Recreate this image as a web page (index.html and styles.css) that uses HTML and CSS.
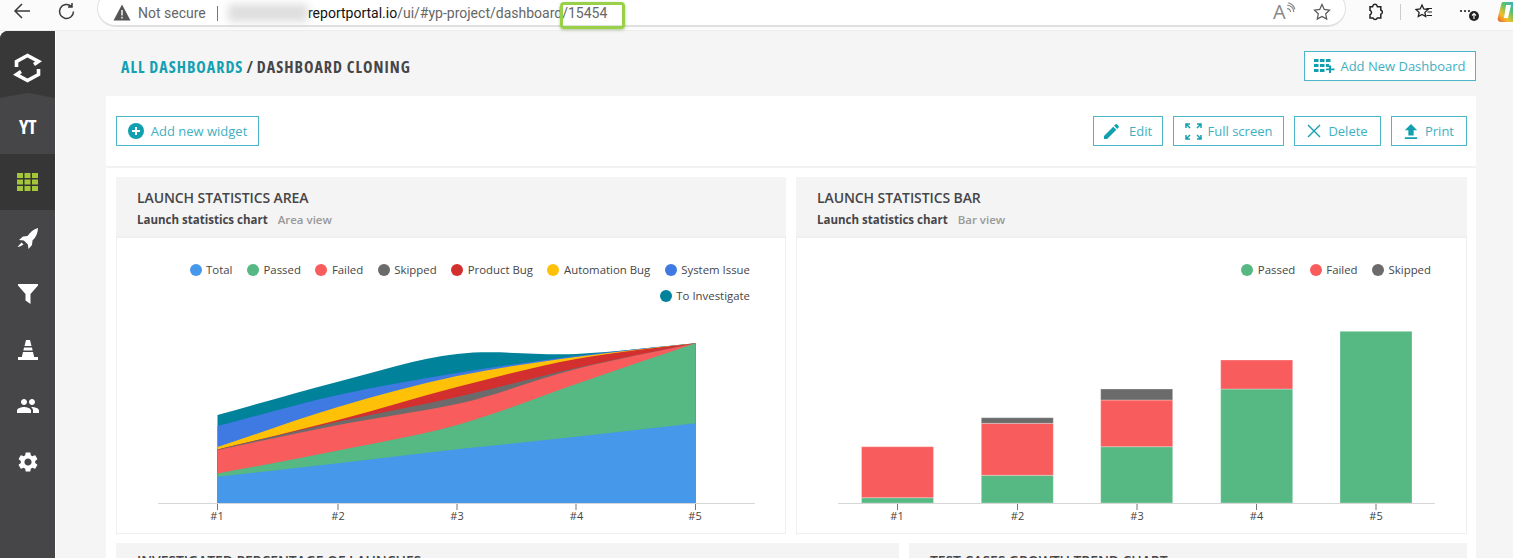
FILE: index.html
```html
<!DOCTYPE html>
<html lang="en">
<head>
<meta charset="utf-8">
<title>Dashboard cloning</title>
<link rel="stylesheet" href="styles.css">
</head>
<body>
<header class="browser">
  <svg class="nav-icon" width="20" height="20" viewBox="0 0 20 20"><path d="M18 10H3M10 3l-7 7 7 7" fill="none" stroke="#3a3a3a" stroke-width="1.5"/></svg>
  <svg class="nav-icon reload" width="20" height="20" viewBox="0 0 20 20"><path d="M16.5 9.5a7 7 0 1 1-2.2-5.1M15 1v4h-4" fill="none" stroke="#3a3a3a" stroke-width="1.5"/></svg>
  <div class="omnibox">
    <svg class="warn" width="18" height="17" viewBox="0 0 18 17"><path d="M9 0.5L17.5 16.5H0.5Z" fill="#555"/><path d="M9 6v5.5M9 12.8v1.6" stroke="#fff" stroke-width="1.4"/></svg>
    <span class="not-secure">Not secure</span>
    <span class="omni-sep"></span>
    <span class="blurred"></span>
    <span class="url"><span class="host">reportportal.io</span>/ui/#yp-project/dashboard/15454</span>
    <span class="read-aloud">A<svg width="10" height="11" viewBox="0 0 9 10"><path d="M1 6a3 3 0 0 1 3 3M1 3a6 6 0 0 1 6 6M2 0.8a8 8 0 0 1 6 6" fill="none" stroke="#888" stroke-width="1"/></svg></span>
    <svg class="star" width="18" height="18" viewBox="0 0 18 18"><path d="M9 1.5l2.3 4.9 5.2.7-3.8 3.7 1 5.3L9 13.4l-4.7 2.7 1-5.3L1.5 7.1l5.2-.7z" fill="none" stroke="#555" stroke-width="1.2"/></svg>
    <span class="highlight"></span>
  </div>
  <div class="browser-tools">
    <svg width="18" height="18" viewBox="0 0 18 18"><path d="M6 2.5c.6-1.6 3.4-1.6 4 0l.4 1.2h3.4v3.4c1.9.5 2.3 3.5 0 4.2v3.7h-3.5c-.7 1.9-3.6 1.9-4.3 0H3v-3.3c2-.6 2-3.7 0-4.3V3.7h2.6z" fill="none" stroke="#222" stroke-width="1.5"/></svg>
    <span class="tool-sep"></span>
    <svg class="fav" width="18" height="18" viewBox="0 0 18 18"><path d="M7 2l1.8 4 4.2.5-3.1 2.9.8 4.2L7 11.5l-3.7 2.1.8-4.2L1 6.500l4.200-.5z" fill="none" stroke="#222" stroke-width="1.3"/><path d="M11.500 5.500H17M12.500 9H17M11.500 12.500H17" stroke="#222" stroke-width="1.200"/></svg>
    <svg class="more" width="22" height="16" viewBox="0 0 22 16"><circle cx="2" cy="5" r="1.100" fill="#222"/><circle cx="6" cy="5" r="1.100" fill="#222"/><circle cx="10" cy="5" r="1.100" fill="#222"/><circle cx="15" cy="10" r="5" fill="#222"/><path d="M15 13V7.500M13 9.500l2-2 2 2" fill="none" stroke="#fff" stroke-width="1.100"/></svg>
    <svg class="copilot" width="20" height="22" viewBox="0 0 20 22"><defs><linearGradient id="cop" x1="1" y1="0" x2="0" y2="1"><stop offset="0" stop-color="#2aa5ea"/><stop offset=".4" stop-color="#5bc36a"/><stop offset=".7" stop-color="#f4c025"/><stop offset="1" stop-color="#e5583e"/></linearGradient></defs><path d="M6 1h10c3 0 4 2 4 4v12c0 3-2 4-4 4H4C1 21 0 18 1 16L4 4c.400-2 1-3 2-3z" fill="url(#cop)"/><path d="M9 4h5l-3 13H7z" fill="#fff"/></svg>
  </div>
</header>

<div class="app">
  <nav class="sidebar">
    <div class="side-logo">
      <svg width="29" height="32" viewBox="0 0 29 32"><path d="M3.500 15V9.500L14.500 3.500 25.500 9.500 21 12.500" fill="none" stroke="#fff" stroke-width="3.600"/><path d="M25.500 17v5.500L14.500 28.500 3.500 22.500 8 19.500" fill="none" stroke="#fff" stroke-width="3.600"/></svg>
    </div>
    <div class="side-item"><span class="project">YT</span></div>
    <div class="side-item active">
      <svg width="21" height="18" viewBox="0 0 21 18" fill="#a4c639"><rect width="6" height="5"/><rect x="7.500" width="6" height="5"/><rect x="15" width="6" height="5"/><rect y="6.500" width="6" height="5"/><rect x="7.500" y="6.500" width="6" height="5"/><rect x="15" y="6.500" width="6" height="5"/><rect y="13" width="6" height="5"/><rect x="7.500" y="13" width="6" height="5"/><rect x="15" y="13" width="6" height="5"/></svg>
    </div>
    <div class="side-item">
      <svg width="21" height="21" viewBox="0 0 21 21" fill="#fff"><path d="M21 0c-.2 5-2 9.500-5.500 12.500l-.5 4.500-3.500 4-.6-4.500-4-4L2 12l4-3.500 4.500-.5C13 4.500 16.500 1 21 0z"/><path d="M4.500 14.500L6.500 16.500 3 18.500 0.500 19z"/></svg>
    </div>
    <div class="side-item">
      <svg width="20" height="20" viewBox="0 0 20 20" fill="#fff"><path d="M0 0h20v1.500L12.500 10v10l-5-3.500V10L0 1.500z"/></svg>
    </div>
    <div class="side-item">
      <svg width="20" height="20" viewBox="0 0 20 20" fill="#fff"><path d="M8 0h4l1.500 6h-7zM6 7.500h8l.6 3H5.400zM5 12h10l1.200 5H20v3H0v-3h3.800z"/></svg>
    </div>
    <div class="side-item">
      <svg width="22" height="22" viewBox="1 1 22 22" fill="#fff"><path d="M16 11c1.660 0 2.990-1.340 2.990-3S17.660 5 16 5c-1.660 0-3 1.340-3 3s1.340 3 3 3zm-8 0c1.660 0 2.990-1.340 2.990-3S9.660 5 8 5C6.340 5 5 6.340 5 8s1.340 3 3 3zm0 2c-2.330 0-7 1.170-7 3.500V19h14v-2.500c0-2.330-4.670-3.500-7-3.500zm8 0c-.290 0-.620.020-.970.050 1.160.840 1.970 1.970 1.970 3.450V19h6v-2.500c0-2.330-4.670-3.500-7-3.500z"/></svg>
    </div>
    <div class="side-item">
      <svg width="24" height="24" viewBox="0 0 24 24" fill="#fff"><path d="M19.140 12.940c.040-.300.060-.610.060-.940 0-.320-.020-.640-.070-.940l2.030-1.580c.180-.140.230-.410.120-.610l-1.920-3.320c-.120-.220-.370-.290-.590-.220l-2.390.960c-.500-.380-1.030-.700-1.620-.940l-.360-2.540c-.040-.240-.240-.410-.480-.410h-3.840c-.240 0-.430.170-.470.410l-.360 2.540c-.590.240-1.130.570-1.620.940l-2.390-.960c-.220-.080-.470 0-.590.220L2.740 8.870c-.120.210-.080.470.120.610l2.030 1.580c-.050.300-.090.630-.090.940s.020.640.070.940l-2.030 1.580c-.180.140-.230.410-.12.610l1.920 3.320c.120.220.370.290.590.220l2.390-.960c.500.380 1.030.700 1.620.940l.360 2.540c.050.240.240.410.480.410h3.840c.240 0 .440-.170.470-.41l.360-2.540c.590-.240 1.130-.560 1.620-.940l2.390.960c.220.080.470 0 .590-.220l1.920-3.320c.120-.220.070-.470-.120-.610l-2.010-1.580zM12 15.600c-1.980 0-3.600-1.620-3.600-3.600s1.620-3.600 3.600-3.600 3.600 1.620 3.600 3.600-1.620 3.600-3.600 3.600z"/></svg>
    </div>
  </nav>

  <main class="main">
    <div class="page-head">
      <div class="crumbs"><a class="crumb-link">ALL DASHBOARDS</a><span class="crumb-sep">/</span><span class="crumb-current">DASHBOARD CLONING</span></div>
      <button class="btn btn-add-dash">
        <svg width="21" height="14" viewBox="0 0 21 14" fill="#12a0b0"><rect width="4.500" height="3"/><rect x="6" width="4.500" height="3"/><rect x="12" width="4.500" height="3"/><rect y="5" width="4.500" height="3"/><rect x="6" y="5" width="4.500" height="3"/><rect x="12" y="5" width="3" height="3"/><rect y="10" width="4.500" height="3"/><rect x="6" y="10" width="4.500" height="3"/><path d="M15 6.500h2v3h3.500v1.700H17V14h-2v-2.800h-3V9.500h3z"/></svg>
        Add New Dashboard
      </button>
    </div>

    <section class="panel">
      <div class="toolbar">
        <button class="btn btn-widget">
          <svg width="16" height="16" viewBox="0 0 16 16"><circle cx="8" cy="8" r="8" fill="#12a0b0"/><path d="M8 4v8M4 8h8" stroke="#fff" stroke-width="2"/></svg>
          Add new widget
        </button>
        <div class="toolbar-right">
          <button class="btn btn-edit">
            <svg width="15" height="15" viewBox="3 3 18 18" fill="#12a0b0"><path d="M3 17.250V21h3.750L17.810 9.940l-3.750-3.750L3 17.250zM20.710 7.040c.390-.390.390-1.020 0-1.410l-2.340-2.340c-.390-.390-1.020-.390-1.410 0l-1.830 1.830 3.750 3.750 1.830-1.830z"/></svg>
            Edit
          </button>
          <button class="btn btn-full">
            <svg width="17" height="17" viewBox="0 0 17 17" fill="none" stroke="#12a0b0" stroke-width="1.500"><path d="M1 5V1h4M1 1l4 4M12 1h4v4M16 1l-4 4M1 12v4h4M1 16l4-4M16 12v4h-4M16 16l-4-4"/></svg>
            Full screen
          </button>
          <button class="btn btn-delete">
            <svg width="14" height="14" viewBox="0 0 14 14"><path d="M1 1l12 12M13 1L1 13" stroke="#12a0b0" stroke-width="1.400"/></svg>
            Delete
          </button>
          <button class="btn btn-print">
            <svg width="14" height="15" viewBox="5 3 14 17" fill="#12a0b0"><path d="M9 16h6v-6h4l-7-7-7 7h4zm-4 2h14v2H5z"/></svg>
            Print
          </button>
        </div>
      </div>

      <div class="widget-row">
        <article class="widget widget-left">
          <header class="widget-head">
            <h2 class="widget-title">LAUNCH STATISTICS AREA</h2>
            <p class="widget-sub"><b>Launch statistics chart</b><span>Area view</span></p>
          </header>
          <div class="widget-body">
            <ul class="legend legend-wide">
              <li><i class="dot c-total"></i>Total</li>
              <li><i class="dot c-passed"></i>Passed</li>
              <li><i class="dot c-failed"></i>Failed</li>
              <li><i class="dot c-skipped"></i>Skipped</li>
              <li><i class="dot c-product"></i>Product Bug</li>
              <li><i class="dot c-auto"></i>Automation Bug</li>
              <li><i class="dot c-system"></i>System Issue</li>
              <li><i class="dot c-ti"></i>To Investigate</li>
            </ul>
            <svg class="chart" width="668" height="296" viewBox="117 238 668 296">
              <path fill="#00829b" d="M217.500 503V415C258 403.900 298 391.900 338 381.700C378 371.500 417 358.600 457 354C497 349.400 536 355.800 576 354C616 352.200 655 346.900 695.500 343.300V503Z"/>
              <path fill="#3f7ae3" d="M217.500 503V426C258 415.700 298 403.800 338 395C378 386.200 417 379.500 457 373C497 366.500 536 361 576 356C616 351 655 347.500 695.500 343.300V503Z"/>
              <path fill="#ffc107" d="M217.500 503V447C258 433.700 298 418.800 338 407C378 395.200 417 384.300 457 376C497 367.700 536 362.500 576 357C616 351.500 655 347.900 695.500 343.300V503Z"/>
              <path fill="#d32f2f" d="M217.500 503V449.500C258 439.700 298 430.400 338 420C378 409.600 417 397.200 457 387C497 376.800 536 366.300 576 359C616 351.700 655 348.500 695.500 343.300V503Z"/>
              <path fill="#6b6b6b" d="M217.500 503V449.500C258 440.200 298 430.500 338 421.700C378 412.900 417 405.900 457 397C497 388.100 536 377 576 368C616 359 655 351.500 695.500 343.300V503Z"/>
              <path fill="#f85c5c" d="M217.500 503V450C258 441.700 298 432.700 338 425C378 417.300 417 412.500 457 404C497 395.500 536 379.100 576 369C616 358.900 655 351.900 695.500 343.300V503Z"/>
              <path fill="#56b883" d="M217.500 503V473.500C258 465.800 298 458.600 338 450.500C378 442.400 417 436 457 425C497 414 536 397.700 576 384C616 370.300 655 356.900 695.500 343.300V503Z"/>
              <path fill="#4698ea" d="M217.500 503V476.700L338 463.300L457 449.300L576 436.700L695.500 423.300V503Z"/>
              <path class="axis" d="M158 503.500H755"/>
              <path class="tick" d="M217.500 504v6M338 504v6M457 504v6M576 504v6M695.500 504v6"/>
              <g class="tick-label">
                <text x="217" y="520">#1</text><text x="338" y="520">#2</text><text x="457" y="520">#3</text><text x="576.500" y="520">#4</text><text x="695" y="520">#5</text>
              </g>
            </svg>
          </div>
        </article>

        <article class="widget widget-right">
          <header class="widget-head">
            <h2 class="widget-title">LAUNCH STATISTICS BAR</h2>
            <p class="widget-sub"><b>Launch statistics chart</b><span>Bar view</span></p>
          </header>
          <div class="widget-body">
            <ul class="legend">
              <li><i class="dot c-passed"></i>Passed</li>
              <li><i class="dot c-failed"></i>Failed</li>
              <li><i class="dot c-skipped"></i>Skipped</li>
            </ul>
            <svg class="chart" width="669" height="296" viewBox="797 238 669 296">
              <g class="bars">
                <rect x="861.500" y="497.700" width="72" height="5.300" fill="#56b883"/>
                <rect x="861.500" y="446.700" width="72" height="51" fill="#f85c5c"/>
                <rect x="981.300" y="475.300" width="72" height="27.700" fill="#56b883"/>
                <rect x="981.300" y="423.300" width="72" height="52" fill="#f85c5c"/>
                <rect x="981.300" y="417.700" width="72" height="5.600" fill="#6b6b6b"/>
                <rect x="1100.700" y="446.700" width="72" height="56.300" fill="#56b883"/>
                <rect x="1100.700" y="400" width="72" height="46.700" fill="#f85c5c"/>
                <rect x="1100.700" y="389" width="72" height="11" fill="#6b6b6b"/>
                <rect x="1220.700" y="389" width="72" height="114" fill="#56b883"/>
                <rect x="1220.700" y="360" width="72" height="29" fill="#f85c5c"/>
                <rect x="1340" y="331.300" width="72" height="171.700" fill="#56b883"/>
              </g>
              <path class="axis" d="M838 503.500H1435"/>
              <path class="tick" d="M897.500 504v6M1017.500 504v6M1137 504v6M1256.500 504v6M1376 504v6"/>
              <g class="tick-label">
                <text x="897" y="520">#1</text><text x="1017.500" y="520">#2</text><text x="1137" y="520">#3</text><text x="1256.500" y="520">#4</text><text x="1376" y="520">#5</text>
              </g>
            </svg>
          </div>
        </article>
      </div>

      <div class="widget-row">
        <article class="widget widget-wide"><header class="widget-head widget-head-next"><h2 class="widget-title">INVESTIGATED PERCENTAGE OF LAUNCHES</h2></header></article>
        <article class="widget widget-narrow"><header class="widget-head widget-head-next"><h2 class="widget-title">TEST CASES GROWTH TREND CHART</h2></header></article>
      </div>
    </section>
  </main>
</div>
</body>
</html>
```

FILE: styles.css
```css
* { box-sizing: border-box; }
html, body { margin: 0; height: 558px; overflow: hidden; }
body { background: #fff; font-family: "Open Sans", "Liberation Sans", sans-serif; color: #464547; }
ul { list-style: none; margin: 0; padding: 0; }
h2, p { margin: 0; }

/* Browser chrome */
.browser { display: flex; align-items: flex-start; height: 31px; background: #fbfbfb; border-bottom: 1px solid #ededed; }
.nav-icon { margin: 1px 0 0 12px; flex: none; }
.reload { margin-left: 25px; margin-top: 2px; }
.omnibox { position: relative; display: flex; align-items: center; width: 1249px; height: 37px; margin: -10px 0 0 20px; padding: 10px 0 0 15px; background: #fff; border: 1px solid #e0e0e0; border-bottom-width: 2px; border-radius: 20px; flex: none; font-family: Roboto, "Open Sans", sans-serif; font-size: 14px; color: #666; }
.warn { flex: none; margin-top: -2px; }
.not-secure { margin-left: 7px; width: 79px; font-size: 14px; }
.omni-sep { width: 1px; height: 15px; background: #777; }
.blurred { width: 80px; height: 18px; margin-left: 10px; background: #c4c4c4; filter: blur(4px); opacity: .55; }
.url { white-space: nowrap; }
.host { color: #111; }
.read-aloud { position: absolute; left: 1175px; top: 10px; display: flex; font-family: "Open Sans", sans-serif; font-size: 20px; line-height: 22px; color: #888; }
.read-aloud svg { margin-top: 1px; }
.star { position: absolute; left: 1215px; top: 12px; }
.highlight { position: absolute; left: 462px; top: 11px; width: 65px; height: 27px; border: 3px solid #98d047; border-radius: 4px; box-shadow: 0 1px 3px rgba(90,130,40,.45); }
.browser-tools { display: flex; align-items: center; margin: 3px 0 0 21px; height: 18px; }
.tool-sep { width: 1px; height: 16px; margin-left: 15px; background: #ccc; }
.fav { margin-left: 14px; }
.more { margin-left: 26px; margin-top: 4px; }
.copilot { margin-left: 16px; flex: none; }

/* App shell */
.app { display: flex; height: 527px; }
.sidebar { flex: none; width: 55px; background: #464547; border-radius: 8px 0 0 0; overflow: hidden; }
.side-logo { display: flex; align-items: center; justify-content: center; height: 67px; padding-top: 6px; background: #383838; clip-path: polygon(0 0, 100% 0, 100% 100%, 50% 92%, 0 100%); }
.side-item { display: flex; align-items: center; justify-content: center; height: 56px; }
.side-item.active { background: #363636; }
.project { font-size: 20px; font-weight: 700; font-stretch: 75%; color: #fff; letter-spacing: -.5px; }

.main { flex: 1; min-width: 0; margin-left: 1px; padding: 0 37px 0 50px; background: #f5f5f5; }
.page-head { display: flex; align-items: center; justify-content: space-between; height: 65px; padding: 5px 0 0 15px; }
.crumbs { display: flex; gap: 3px; margin-top: 1px; font-size: 16px; font-weight: 700; font-stretch: 75%; letter-spacing: 1px; }
.crumb-link { color: #13a0b3; }

/* Buttons */
.btn { display: flex; align-items: center; justify-content: center; height: 30px; padding: 0; background: #fff; border: 1.500px solid #4fb6c9; font: 400 13px "Open Sans", sans-serif; color: #3fb0c2; white-space: nowrap; }
.btn svg { flex: none; }
.btn-add-dash { width: 172px; gap: 5px; }
.btn-widget { width: 143px; gap: 7px; }
.btn-edit { width: 70px; gap: 10px; }
.btn-full { width: 111px; gap: 6px; }
.btn-delete { width: 87px; gap: 7px; }
.btn-print { width: 76px; gap: 7px; }

/* Panel */
.panel { height: 462px; overflow: hidden; background: #fff; padding-right: 9px; }
.toolbar { display: flex; align-items: center; justify-content: space-between; height: 72px; margin-right: -9px; padding: 0 9px 0 10px; border-bottom: 2px solid #f2f2f2; }
.toolbar-right { display: flex; gap: 10px; }

/* Widgets */
.widget-row { display: flex; gap: 10px; margin: 9px 0 0 10px; }
.widget { flex: none; height: 357px; border: 1px solid #efefef; border-top: 0; }
.widget-left { width: 670px; }
.widget-right { width: 671px; }
.widget-wide { width: 783px; border: 0; }
.widget-narrow { width: 558px; border: 0; }
.widget-head { height: 61px; margin: 0 -1px; padding: 11px 21px 0; background: #f4f4f4; border-bottom: 2px solid #efefef; }
.widget-head-next { padding-top: 8px; margin: 0; }
.widget-title { font-size: 14px; font-weight: 600; letter-spacing: -.1px; line-height: 20px; color: #464547; }
.widget-sub { display: flex; gap: 10px; margin-top: 4px; font-size: 11.500px; line-height: 16px; }
.widget-sub b { font-weight: 700; }
.widget-sub span { font-weight: 600; color: #999; }
.widget-body { position: relative; height: 296px; }
.chart { display: block; }
.legend { position: absolute; left: 0; right: 0; top: 19px; display: flex; flex-wrap: wrap; justify-content: flex-end; gap: 0 14.500px; padding: 0 35px 0 30px; font-size: 11.400px; line-height: 26px; color: #464547; }
.legend li { display: flex; align-items: center; gap: 4.500px; white-space: nowrap; }
.dot { width: 12px; height: 12px; border-radius: 50%; }
.c-total { background: #4698ea; }
.c-passed { background: #56b883; }
.c-failed { background: #f85c5c; }
.c-skipped { background: #6b6b6b; }
.c-product { background: #d32f2f; }
.c-auto { background: #ffc107; }
.c-system { background: #3f7ae3; }
.c-ti { background: #00829b; }

.axis { fill: none; stroke: #d6d6d6; stroke-width: 1; }
.tick { fill: none; stroke: #777; stroke-width: 1; }
.tick-label text { font-size: 11px; fill: #444; text-anchor: middle; }
.bars rect { stroke: rgba(255,255,255,.3); stroke-width: 1; }
```
